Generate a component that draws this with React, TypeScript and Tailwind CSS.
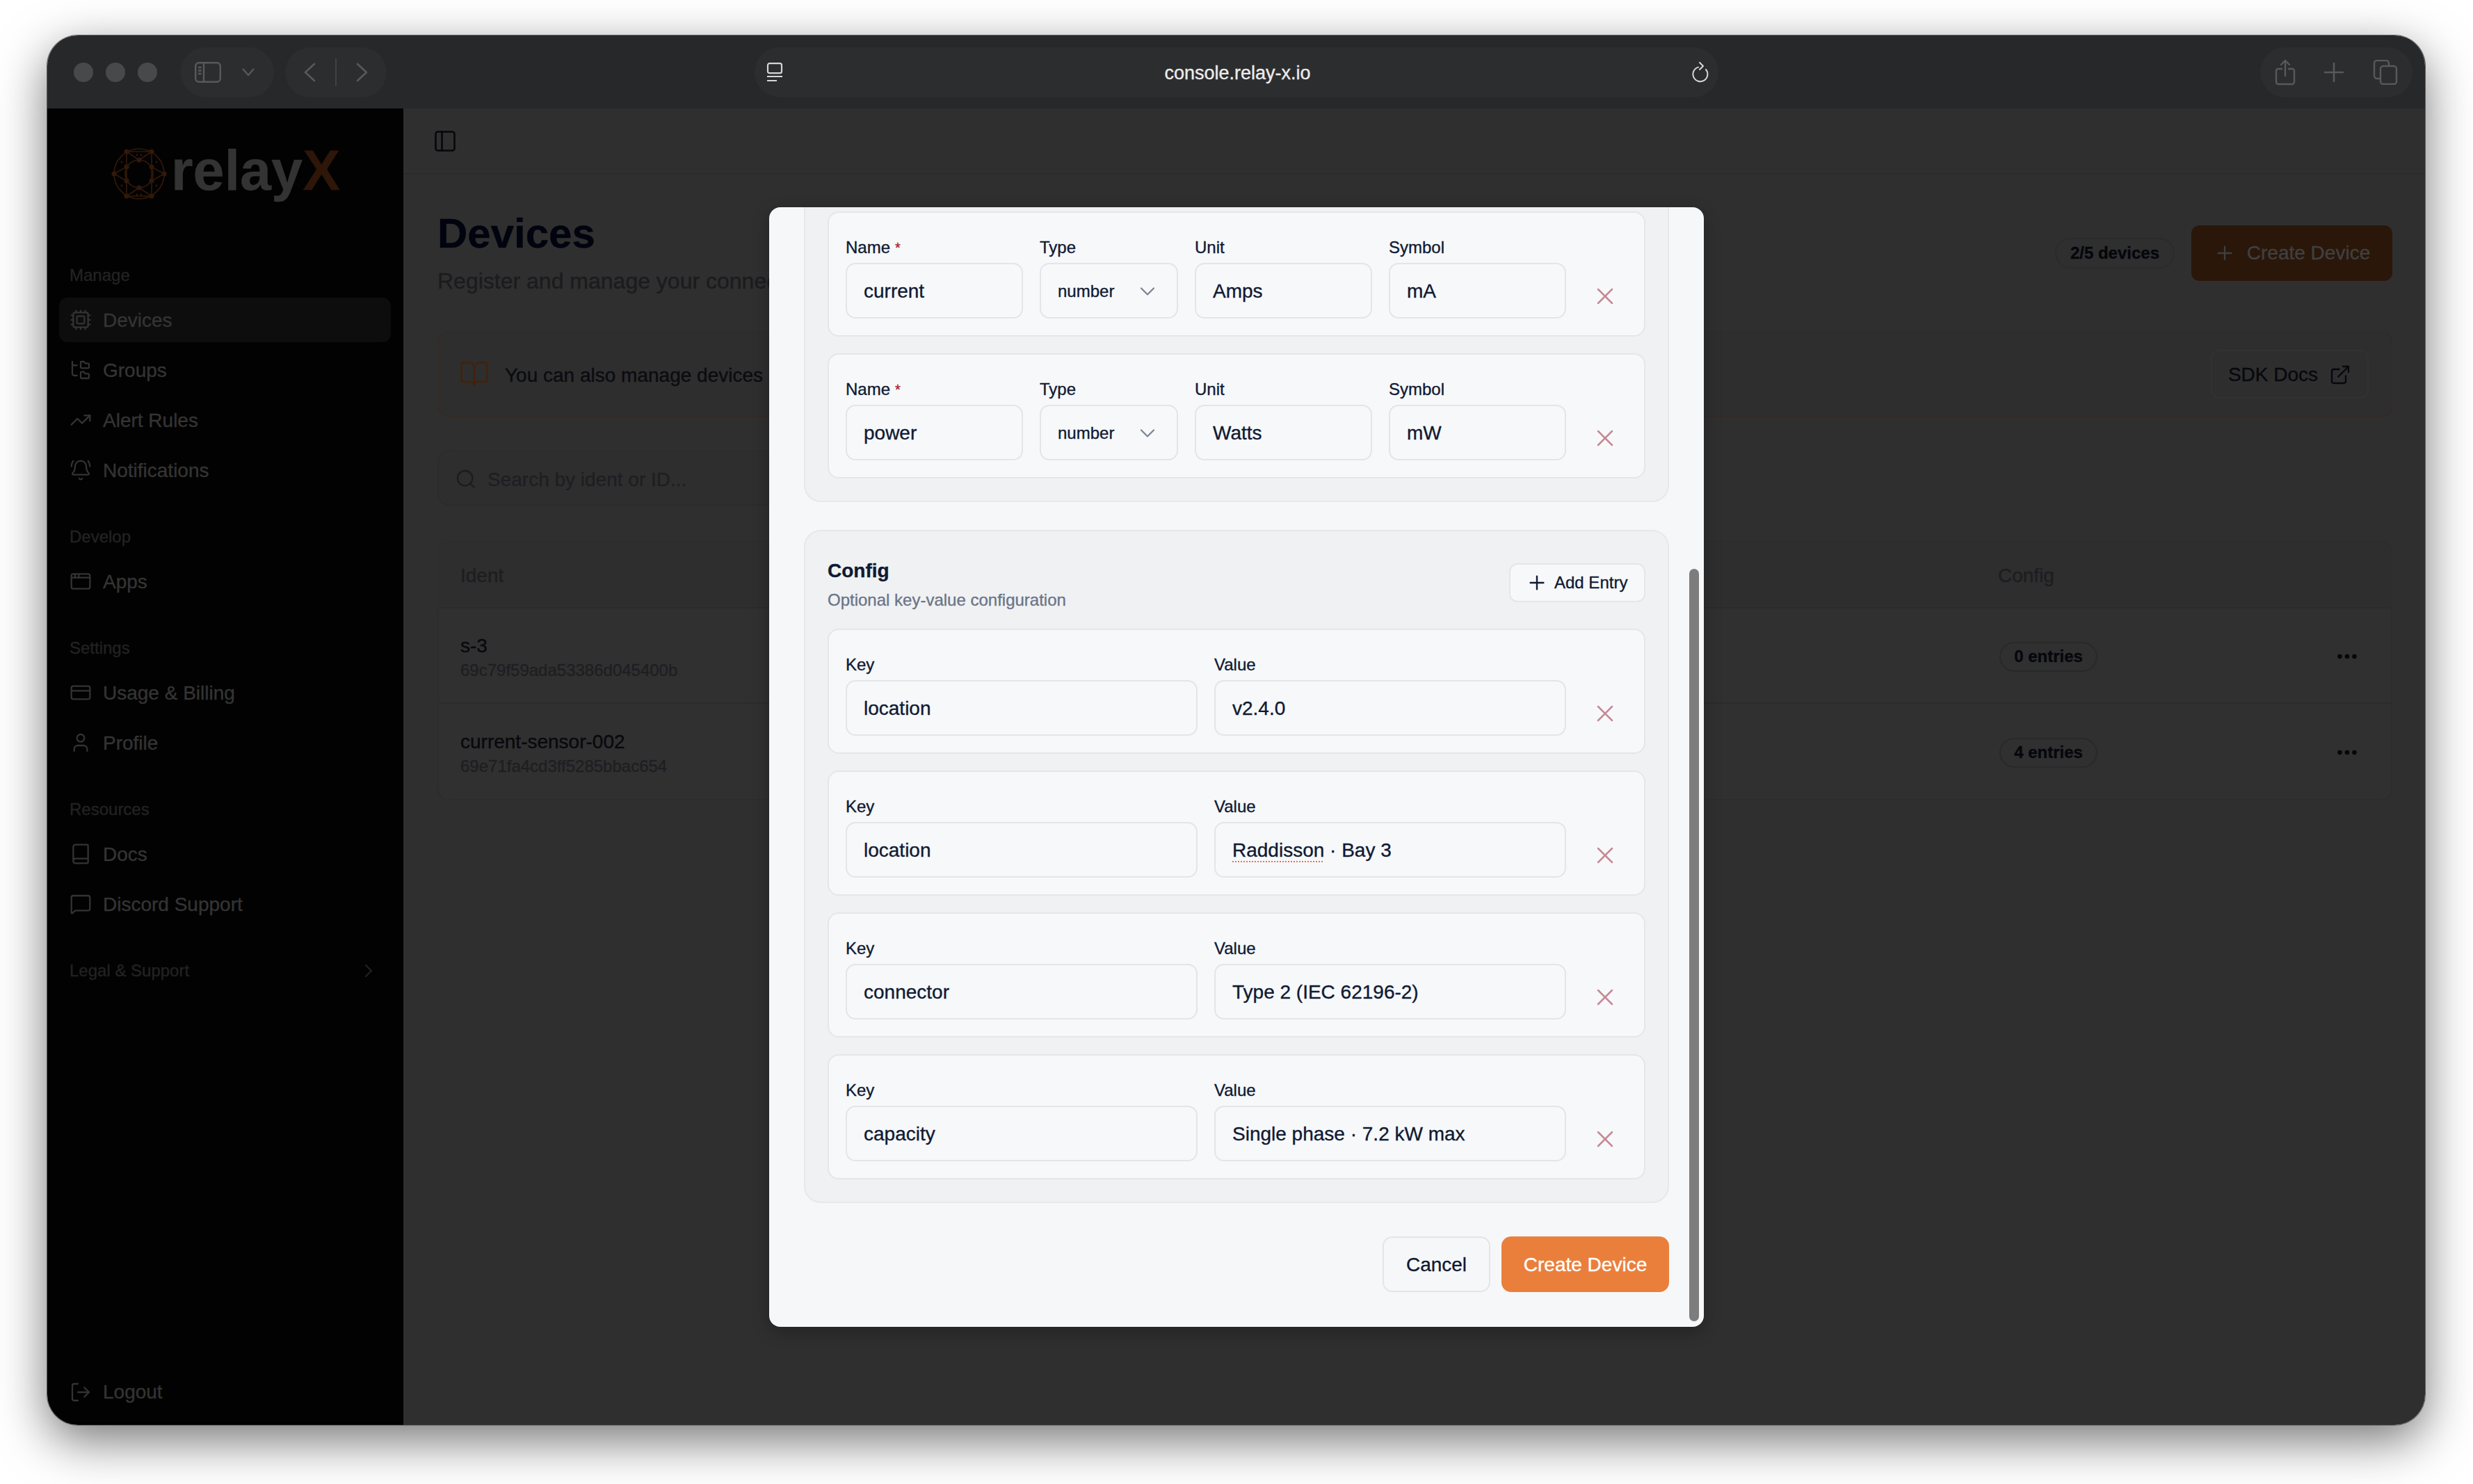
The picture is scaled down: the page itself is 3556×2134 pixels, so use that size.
import type { ReactNode } from "react"
import {
  AppWindow,
  Book,
  BookOpen,
  BellRing,
  ChevronDown,
  ChevronRight,
  Cpu,
  CreditCard,
  Ellipsis,
  ExternalLink,
  FolderTree,
  LogOut,
  MessageSquare,
  PanelLeft,
  Plus,
  Search,
  TrendingUp,
  User,
  X,
} from "lucide-react"

const sideGroups = [
  {
    label: "Manage",
    items: [
      { name: "Devices", icon: Cpu, active: true },
      { name: "Groups", icon: FolderTree },
      { name: "Alert Rules", icon: TrendingUp },
      { name: "Notifications", icon: BellRing },
    ],
  },
  { label: "Develop", items: [{ name: "Apps", icon: AppWindow }] },
  {
    label: "Settings",
    items: [
      { name: "Usage & Billing", icon: CreditCard },
      { name: "Profile", icon: User },
    ],
  },
  {
    label: "Resources",
    items: [
      { name: "Docs", icon: Book },
      { name: "Discord Support", icon: MessageSquare },
    ],
  },
]

const metrics = [
  { name: "current", unit: "Amps", symbol: "mA" },
  { name: "power", unit: "Watts", symbol: "mW" },
]

const config: { k: string; v: ReactNode }[] = [
  { k: "location", v: "v2.4.0" },
  {
    k: "location",
    v: (
      <>
        <span className="underline decoration-dotted decoration-2 underline-offset-[6px] [text-decoration-color:#e8705f]">
          Raddisson
        </span>{" "}
        · Bay 3
      </>
    ),
  },
  { k: "connector", v: "Type 2 (IEC 62196-2)" },
  { k: "capacity", v: "Single phase · 7.2 kW max" },
]

const devices = [
  { ident: "s-3", id: "69c79f59ada53386d045400b", entries: "0 entries" },
  { ident: "current-sensor-002", id: "69e71fa4cd3ff5285bbac654", entries: "4 entries" },
]

function Logo() {
  const outer = [
    [-36, 0],
    [36, 0],
    [-18, -32],
    [18, -32],
    [-18, 32],
    [18, 32],
  ]
  const inner = [
    [0, -20],
    [18, -10],
    [18, 10],
    [0, 20],
    [-18, 10],
    [-18, -10],
  ]
  const links = [
    [-18, -32, 0, -20],
    [18, -32, 0, -20],
    [-18, 32, 0, 20],
    [18, 32, 0, 20],
    [-36, 0, -18, -10],
    [-36, 0, -18, 10],
    [36, 0, 18, -10],
    [36, 0, 18, 10],
    [-18, -32, -18, 32],
    [18, -32, 18, 32],
    [-18, -32, 18, -32],
    [-18, 32, 18, 32],
  ]
  return (
    <svg viewBox="-40 -38 80 76" className="h-[76px] w-[80px] text-[#321809]" fill="none" stroke="currentColor" strokeWidth="1.7">
      <circle r="36" />
      <circle r="20" />
      {links.map(([a, b, c, d], i) => (
        <line key={i} x1={a} y1={b} x2={c} y2={d} />
      ))}
      {[...outer, ...inner].map(([x, y], i) => (
        <circle key={i} cx={x} cy={y} r="3.6" fill="currentColor" stroke="none" />
      ))}
      {[
        [-3, -27],
        [3, -27],
        [-3, 30],
        [3, 30],
        [-25, -17],
        [25, -17],
        [-25, 17],
        [25, 17],
      ].map(([x, y], i) => (
        <circle key={i} cx={x} cy={y} r="1.4" fill="currentColor" stroke="none" />
      ))}
    </svg>
  )
}

function Sidebar() {
  return (
    <aside className="flex h-full w-[512px] shrink-0 flex-col bg-[#020202] pl-[17px] pr-[18px]">
      <div className="h-[224px] pt-[56px] pl-[75px]">
        <div className="flex h-[76px] items-center">
          <Logo />
          <span className="mb-[10px] ml-[6px] text-[81px] leading-none font-bold text-[#333333]">
            relay<span className="text-[#2e1609]">X</span>
          </span>
        </div>
      </div>
      <div className="flex flex-col gap-12">
        {sideGroups.map((g) => (
          <div key={g.label} className="flex flex-col">
            <div className="mb-4 h-8 pl-[15px] text-[24px] leading-8 text-[#222222]">{g.label}</div>
            <div className="flex flex-col gap-2">
              {g.items.map((it) => (
                <div
                  key={it.name}
                  className={`flex h-16 items-center gap-4 rounded-[12px] px-[15px] text-[28px] text-[#343434] ${it.active ? "bg-[#0d0d0d]" : ""}`}
                >
                  <it.icon size={32} strokeWidth={1.7} className="shrink-0 text-[#333333]" />
                  <span className="pt-[2px]">{it.name}</span>
                </div>
              ))}
            </div>
          </div>
        ))}
        <div className="flex h-8 items-center justify-between pl-[15px] pr-[16px] text-[24px] text-[#222222]">
          Legal &amp; Support
          <ChevronRight size={32} strokeWidth={1.7} />
        </div>
      </div>
      <div className="mt-auto mb-[15px] flex h-16 items-center gap-4 px-[15px] text-[28px] text-[#343434]">
        <LogOut size={32} strokeWidth={1.7} className="text-[#333333]" />
        Logout
      </div>
    </aside>
  )
}

function TitleBar() {
  return (
    <div className="flex h-[105px] shrink-0 items-center bg-[#27282a] pl-[38px] pt-[1px] text-[#58595b]">
      <div className="flex gap-[18px]">
        <span className="size-[28px] rounded-full bg-[#48494b]" />
        <span className="size-[28px] rounded-full bg-[#48494b]" />
        <span className="size-[28px] rounded-full bg-[#48494b]" />
      </div>
      <div className="ml-[34px] flex h-[72px] w-[134px] items-center rounded-[36px] bg-[#2c2d2f] pl-[20px]">
        <svg viewBox="0 0 38 30" className="h-[30px] w-[38px]" fill="none" stroke="currentColor" strokeWidth="2.4">
          <rect x="1.2" y="1.2" width="35.6" height="27.6" rx="5" />
          <path d="M13 1.5v27M5 8h4.5M5 12.5h4.5M5 17h4.5" />
        </svg>
        <svg viewBox="0 0 18 12" className="ml-[30px] h-[12px] w-[18px]" fill="none" stroke="currentColor" strokeWidth="2.2" strokeLinecap="round">
          <path d="M1.5 1.5 9 10l7.5-8.5" />
        </svg>
      </div>
      <div className="ml-[16px] flex h-[72px] w-[146px] items-center justify-center gap-[28px] rounded-[36px] bg-[#2c2d2f]">
        <svg viewBox="0 0 17 28" className="h-[28px] w-[17px]" fill="none" stroke="currentColor" strokeWidth="2.6" strokeLinecap="round" strokeLinejoin="round">
          <path d="M15 2 2 14l13 12" />
        </svg>
        <span className="h-[40px] w-[2px] bg-[#404143]" />
        <svg viewBox="0 0 17 28" className="h-[28px] w-[17px]" fill="none" stroke="currentColor" strokeWidth="2.6" strokeLinecap="round" strokeLinejoin="round">
          <path d="M2 2l13 12L2 26" />
        </svg>
      </div>
      <div className="ml-[529px] flex h-[72px] w-[1386px] items-center justify-between rounded-[36px] bg-[#2c2d2f] pl-[17px] pr-[14px]">
        <svg viewBox="0 0 24 28" className="h-[28px] w-[24px] text-[#d6d6d6]" fill="none" stroke="currentColor" strokeWidth="2.2">
          <rect x="2" y="1.2" width="20" height="14" rx="2.5" />
          <path d="M1 20h22M1 26h14" />
        </svg>
        <span className="pt-[2px] text-[27px] text-[#ececec]">console.relay-x.io</span>
        <svg viewBox="0 0 24 30" className="h-[30px] w-[24px] text-[#d6d6d6]" fill="none" stroke="currentColor" strokeWidth="2" strokeLinecap="round" strokeLinejoin="round">
          <path d="M9 7.6A10.5 10.5 0 1 0 20 11" />
          <path d="M11 1l5 5-5 5" />
        </svg>
      </div>
      <div className="ml-[779px] flex h-[72px] w-[219px] items-center rounded-[36px] bg-[#2c2d2f] pl-[21px]">
        <svg viewBox="0 0 30 38" className="h-[38px] w-[30px]" fill="none" stroke="currentColor" strokeWidth="2.4" strokeLinecap="round" strokeLinejoin="round">
          <path d="M10 14H5a3 3 0 0 0-3 3v16a3 3 0 0 0 3 3h20a3 3 0 0 0 3-3V17a3 3 0 0 0-3-3h-5" />
          <path d="M15 24V2M9 8l6-6 6 6" />
        </svg>
        <svg viewBox="0 0 28 28" className="ml-[41px] size-[28px]" fill="none" stroke="currentColor" strokeWidth="2.6" strokeLinecap="round">
          <path d="M14 1v26M1 14h26" />
        </svg>
        <svg viewBox="0 0 36 36" className="ml-[42px] size-[36px]" fill="none" stroke="currentColor" strokeWidth="2.4" strokeLinejoin="round">
          <rect x="11" y="9" width="23" height="26" rx="4" />
          <path d="M11 27H6a4 4 0 0 1-4-4V5a4 4 0 0 1 4-4h13a4 4 0 0 1 4 4v4" />
        </svg>
      </div>
    </div>
  )
}

function DevicesPage() {
  return (
    <main className="flex h-full min-w-0 flex-1 flex-col bg-[#2f2f2f]">
      <div className="flex h-[95px] shrink-0 items-center border-b-2 border-[#2b2b2b] pl-[42px]">
        <PanelLeft size={36} strokeWidth={1.7} className="text-[#06070c]" />
      </div>
      <div className="flex flex-col pl-[49px] pr-[47px]">
        <div className="flex items-center justify-between pt-[48px]">
          <div>
            <h1 className="pt-[1px] text-[60px] leading-[72px] font-bold text-[#01030f]">Devices</h1>
            <p className="mt-2 pt-[1px] text-[32px] leading-[47px] text-[#1b1b1e]">Register and manage your connected devices</p>
          </div>
          <div className="flex items-center gap-6 pt-[1px]">
            <span className="flex h-[44px] items-center rounded-full border-2 border-[#2b2b2b] px-[20px] text-[24px] font-bold text-[#05060c]">2/5 devices</span>
            <span className="flex h-[80px] w-[289px] items-center justify-center gap-4 rounded-[12px] bg-[#2a1709] text-[28px] text-[#404040]">
              <Plus size={32} strokeWidth={1.7} />
              Create Device
            </span>
          </div>
        </div>
        <div className="mt-[48px] flex h-[124px] items-center justify-between rounded-[16px] border-2 border-[#332b27] bg-[#2e2e2e] pl-[29px] pr-[32px]">
          <div className="flex items-center gap-[22px]">
            <BookOpen size={44} strokeWidth={1.3} className="text-[#42220c]" />
            <span className="pt-[4px] text-[28px] text-[#0b0b10]">You can also manage devices</span>
          </div>
          <span className="flex h-[70px] w-[227px] items-center justify-center gap-4 rounded-[12px] border-2 border-[#323232] pt-[2px] text-[28px] text-[#07080d]">
            SDK Docs
            <ExternalLink size={32} strokeWidth={1.7} />
          </span>
        </div>
        <div className="mt-[48px] flex h-[79px] w-[1000px] items-center gap-[15px] rounded-[16px] border-2 border-[#2c2c2c] bg-[#2e2e2e] pl-[23px] pt-[2px]">
          <Search size={32} strokeWidth={1.7} className="text-[#1c1c20]" />
          <span className="pt-[2px] text-[28px] text-[#1e1e22]">Search by ident or ID...</span>
        </div>
        <div className="mt-[50px] overflow-hidden rounded-[16px] border-2 border-[#2d2d2d]">
          <div className="flex h-[96px] items-center justify-between border-b-2 border-[#2b2b2b] bg-[#2e2e2e] pl-[31px] pt-[4px] text-[28px] text-[#1d1d21]">
            <span>Ident</span>
            <span className="w-[565px]">Config</span>
          </div>
          {devices.map((d, i) => (
            <div key={d.ident} className={`flex h-[137px] items-center bg-[#303030] pl-[31px] ${i === 0 ? "border-b-2 border-[#2b2b2b]" : ""}`}>
              <div className="flex-1 pt-[6px]">
                <div className="text-[28px] leading-[36px] text-[#08080d]">{d.ident}</div>
                <div className="text-[24px] leading-[34px] text-[#1e1e22]">{d.id}</div>
              </div>
              <div className="w-[459px] pt-[3px]">
                <span className="inline-flex h-[43px] w-[141px] items-center justify-center rounded-full border-2 border-[#292929] text-[24px] font-bold text-[#06070c]">{d.entries}</span>
              </div>
              <div className="mr-[22px] flex w-[82px] justify-center pt-[2px] text-[#06070c]">
                <Ellipsis size={36} strokeWidth={2.4} />
              </div>
            </div>
          ))}
        </div>
      </div>
    </main>
  )
}

function Field({ label, required, children, className }: { label: string; required?: boolean; children: ReactNode; className?: string }) {
  return (
    <div className={className ?? "min-w-0 flex-1"}>
      <div className="mb-[6px] text-[24px] leading-8 text-[#0f1a33]">
        {label}
        {required && <span className="ml-[7px] align-top text-[20px] text-[#b3202c]">*</span>}
      </div>
      <div className="flex h-[80px] items-center rounded-[14px] border-2 border-[#e3e5e8] px-[24px] pt-[2px] text-[28px] text-[#0f1a33]">{children}</div>
    </div>
  )
}

function EntryCard({ children }: { children: ReactNode }) {
  return (
    <div className="flex h-[180px] items-end gap-6 rounded-[16px] border-2 border-[#e4e6e8] bg-[#f7f8fa] px-[24px] pb-[24px]">
      {children}
      <button className="flex h-[64px] w-[64px] shrink-0 items-center justify-center text-[#c58a95]">
        <X size={40} strokeWidth={1.5} />
      </button>
    </div>
  )
}

function Modal() {
  return (
    <div className="absolute left-[1038px] top-[247px] flex h-[1610px] w-[1344px] flex-col overflow-hidden rounded-[16px] bg-[#f6f7f9] px-[50px] shadow-[0_8px_24px_rgba(0,0,0,0.25)]">
      <section className="flex flex-col gap-6 rounded-b-[24px] border-2 border-t-0 border-[#e6e8ea] bg-[#f0f1f3] px-[32px] pt-[6px] pb-[32px]">
        {metrics.map((m) => (
          <EntryCard key={m.name}>
            <Field label="Name" required>{m.name}</Field>
            <Field label="Type" className="w-[199px] shrink-0">
              <div className="flex w-full items-center justify-between text-[24px]">
                number
                <ChevronDown size={36} strokeWidth={1.5} className="text-[#7b8495]" />
              </div>
            </Field>
            <Field label="Unit">{m.unit}</Field>
            <Field label="Symbol">{m.symbol}</Field>
          </EntryCard>
        ))}
      </section>
      <section className="mt-[40px] flex flex-col gap-6 rounded-[24px] border-2 border-[#e6e8ea] bg-[#f0f1f3] p-[32px]">
        <div className="flex items-center justify-between">
          <div className="pt-[1px]">
            <h3 className="text-[28px] leading-[48px] font-bold text-[#0f1a33]">Config</h3>
            <p className="h-[35px] text-[24px] leading-[36px] text-[#6b7588]">Optional key-value configuration</p>
          </div>
          <button className="flex h-[56px] w-[196px] items-center gap-[9px] rounded-[12px] border-2 border-[#e4e6e8] bg-[#f7f8fa] pl-[22px] text-[24px] text-[#0f1a33]">
            <Plus size={32} strokeWidth={1.8} />
            Add Entry
          </button>
        </div>
        {config.map((c, i) => (
          <EntryCard key={i}>
            <Field label="Key">{c.k}</Field>
            <Field label="Value"><span>{c.v}</span></Field>
          </EntryCard>
        ))}
      </section>
      <div className="mt-[48px] flex justify-end gap-4">
        <button className="flex h-[80px] w-[155px] items-center justify-center rounded-[14px] border-2 border-[#e3e5e8] pt-[2px] text-[28px] text-[#0f1a33]">Cancel</button>
        <button className="flex h-[80px] w-[241px] items-center justify-center rounded-[14px] bg-[#ea7f3c] pt-[2px] text-[28px] text-white">Create Device</button>
      </div>
      <div className="absolute right-[7px] top-[520px] h-[1082px] w-[14px] rounded-full bg-[#7d7d7d]" />
    </div>
  )
}

export default function App() {
  return (
    <div className="h-[2134px] w-[3556px] overflow-hidden bg-white pl-[68px] pt-[51px] font-['Liberation_Sans',Arial,sans-serif] [-webkit-text-stroke:0.35px]">
      <div className="relative flex h-[1998px] w-[3419px] flex-col overflow-hidden rounded-[44px] shadow-[0_0_0_1px_#5f5f5f,0_22px_70px_rgba(0,0,0,0.55)]">
        <TitleBar />
        <div className="flex min-h-0 flex-1">
          <Sidebar />
          <DevicesPage />
        </div>
        <Modal />
      </div>
    </div>
  )
}
